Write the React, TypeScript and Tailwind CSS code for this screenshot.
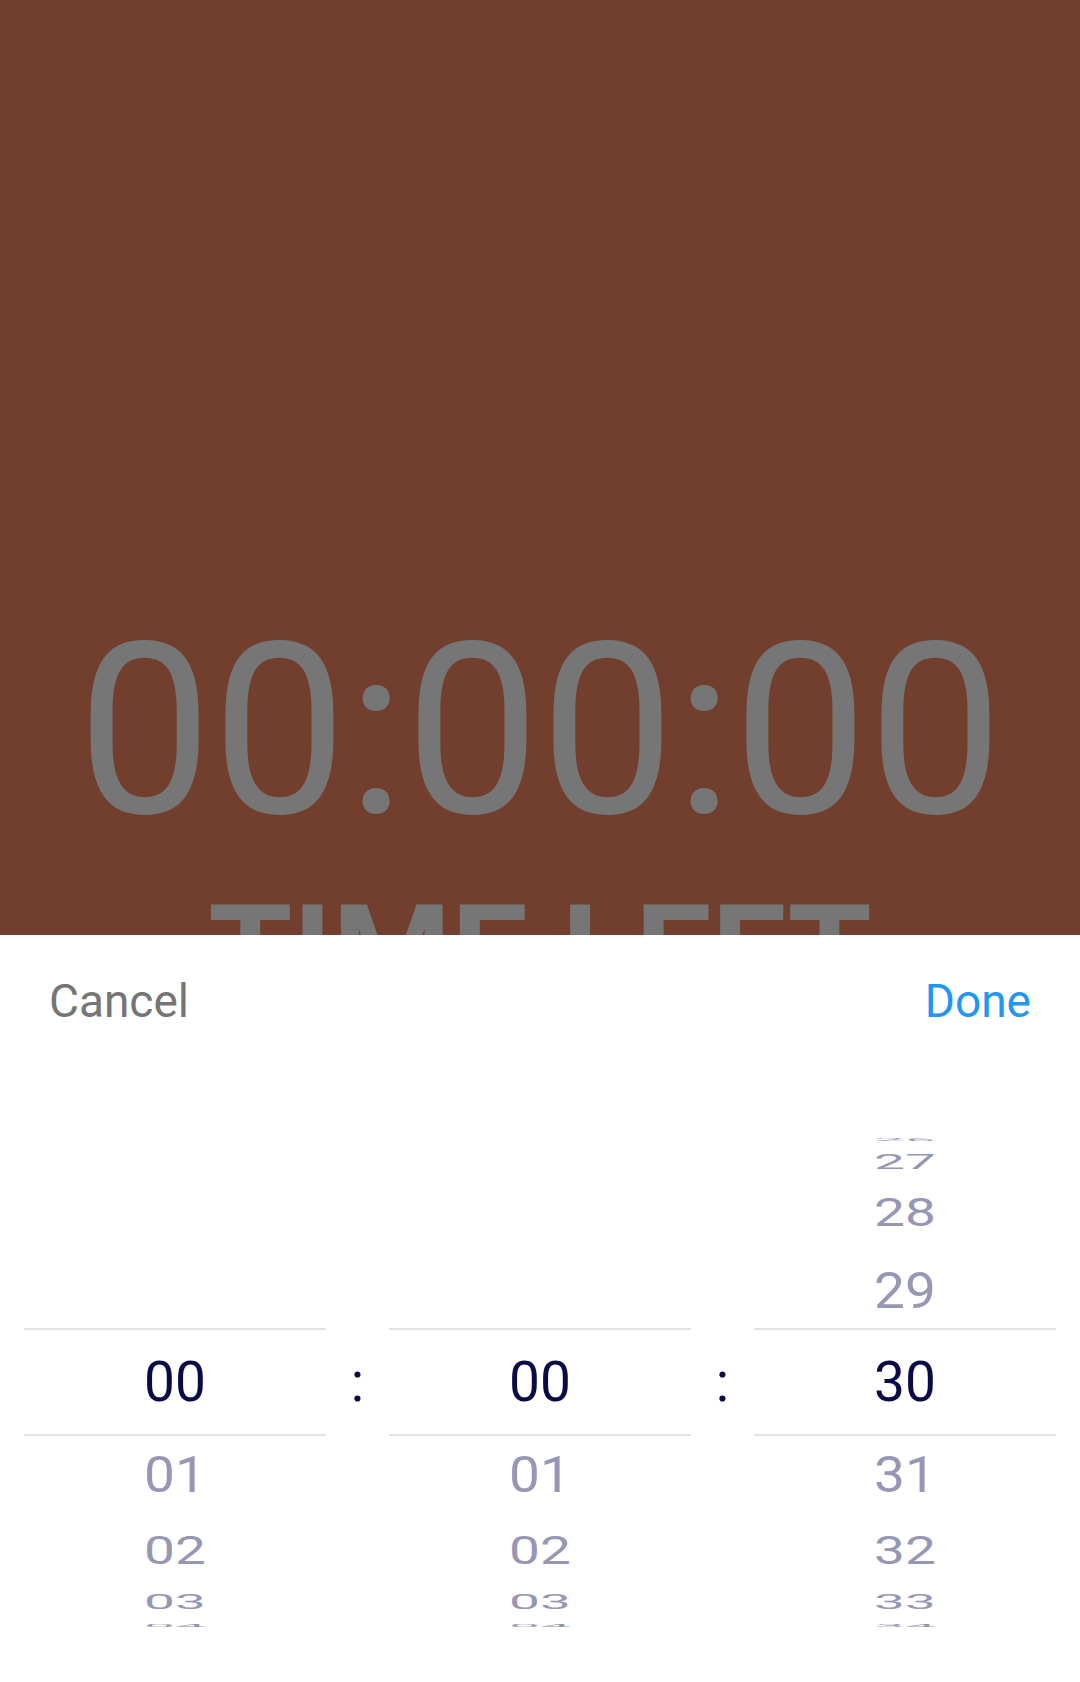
const rows = [
  { k: -4, h: 'h-[22px]', s: 'scale-y-[0.08]' },
  { k: -3, h: 'h-[24px]', s: 'scale-y-[0.36]' },
  { k: -2, h: 'h-[78px]', s: 'scale-y-[0.69]' },
  { k: -1, h: 'h-[76px]', s: 'scale-y-[0.92]' },
  { k: 0, h: 'h-[108px]', s: '' },
  { k: 1, h: 'h-[76px]', s: 'scale-y-[0.92]' },
  { k: 2, h: 'h-[78px]', s: 'scale-y-[0.69]' },
  { k: 3, h: 'h-[24px]', s: 'scale-y-[0.36]' },
  { k: 4, h: 'h-[22px]', s: 'scale-y-[0.08]' },
];

function pad(n: number) {
  return n < 10 ? `0${n}` : `${n}`;
}

function Wheel({ value, max }: { value: number; max: number }) {
  return (
    <div className="w-[302px] flex flex-col">
      {rows.map((r) => {
        const v = value + r.k;
        const label = v >= 0 && v <= max ? pad(v) : '';
        const selected = r.k === 0;
        return (
          <div
            key={r.k}
            className={`${r.h} flex items-center justify-center ${
              selected ? 'border-y-2 border-[#e3e3e6]' : ''
            }`}
          >
            <span
              className={`text-[55px] leading-none ${r.s} ${
                selected ? 'text-[#0a0a46]' : 'text-[#9797b5]'
              }`}
            >
              {label}
            </span>
          </div>
        );
      })}
    </div>
  );
}

function Colon() {
  return (
    <div className="w-[63px] flex items-center justify-center">
      <span className="text-[55px] leading-none text-[#0a0a46]">:</span>
    </div>
  );
}

export default function App() {
  return (
    <div className="w-[1080px] h-[1682px] flex flex-col bg-white font-['Roboto',sans-serif] overflow-hidden">
      <div className="h-[935px] shrink-0 overflow-hidden bg-[#723f2e] flex flex-col items-center pt-[611px]">
        <div className="text-[240px] leading-none text-[#767676] whitespace-nowrap">00:00:00</div>
        <div className="mt-[36px] text-[136px] leading-none font-bold text-[#767676] whitespace-nowrap">
          TIME LEFT
        </div>
      </div>

      <div className="flex-1 flex flex-col">
        <div className="flex items-center justify-between px-[49px] pt-[42px]">
          <button className="text-[46px] leading-[48px] text-[#757575]">Cancel</button>
          <button className="text-[46px] leading-[48px] text-[#2196f3]">Done</button>
        </div>

        <div className="mt-[103px] px-[24px] flex">
          <Wheel value={0} max={23} />
          <Colon />
          <Wheel value={0} max={59} />
          <Colon />
          <Wheel value={30} max={59} />
        </div>
      </div>
    </div>
  );
}
